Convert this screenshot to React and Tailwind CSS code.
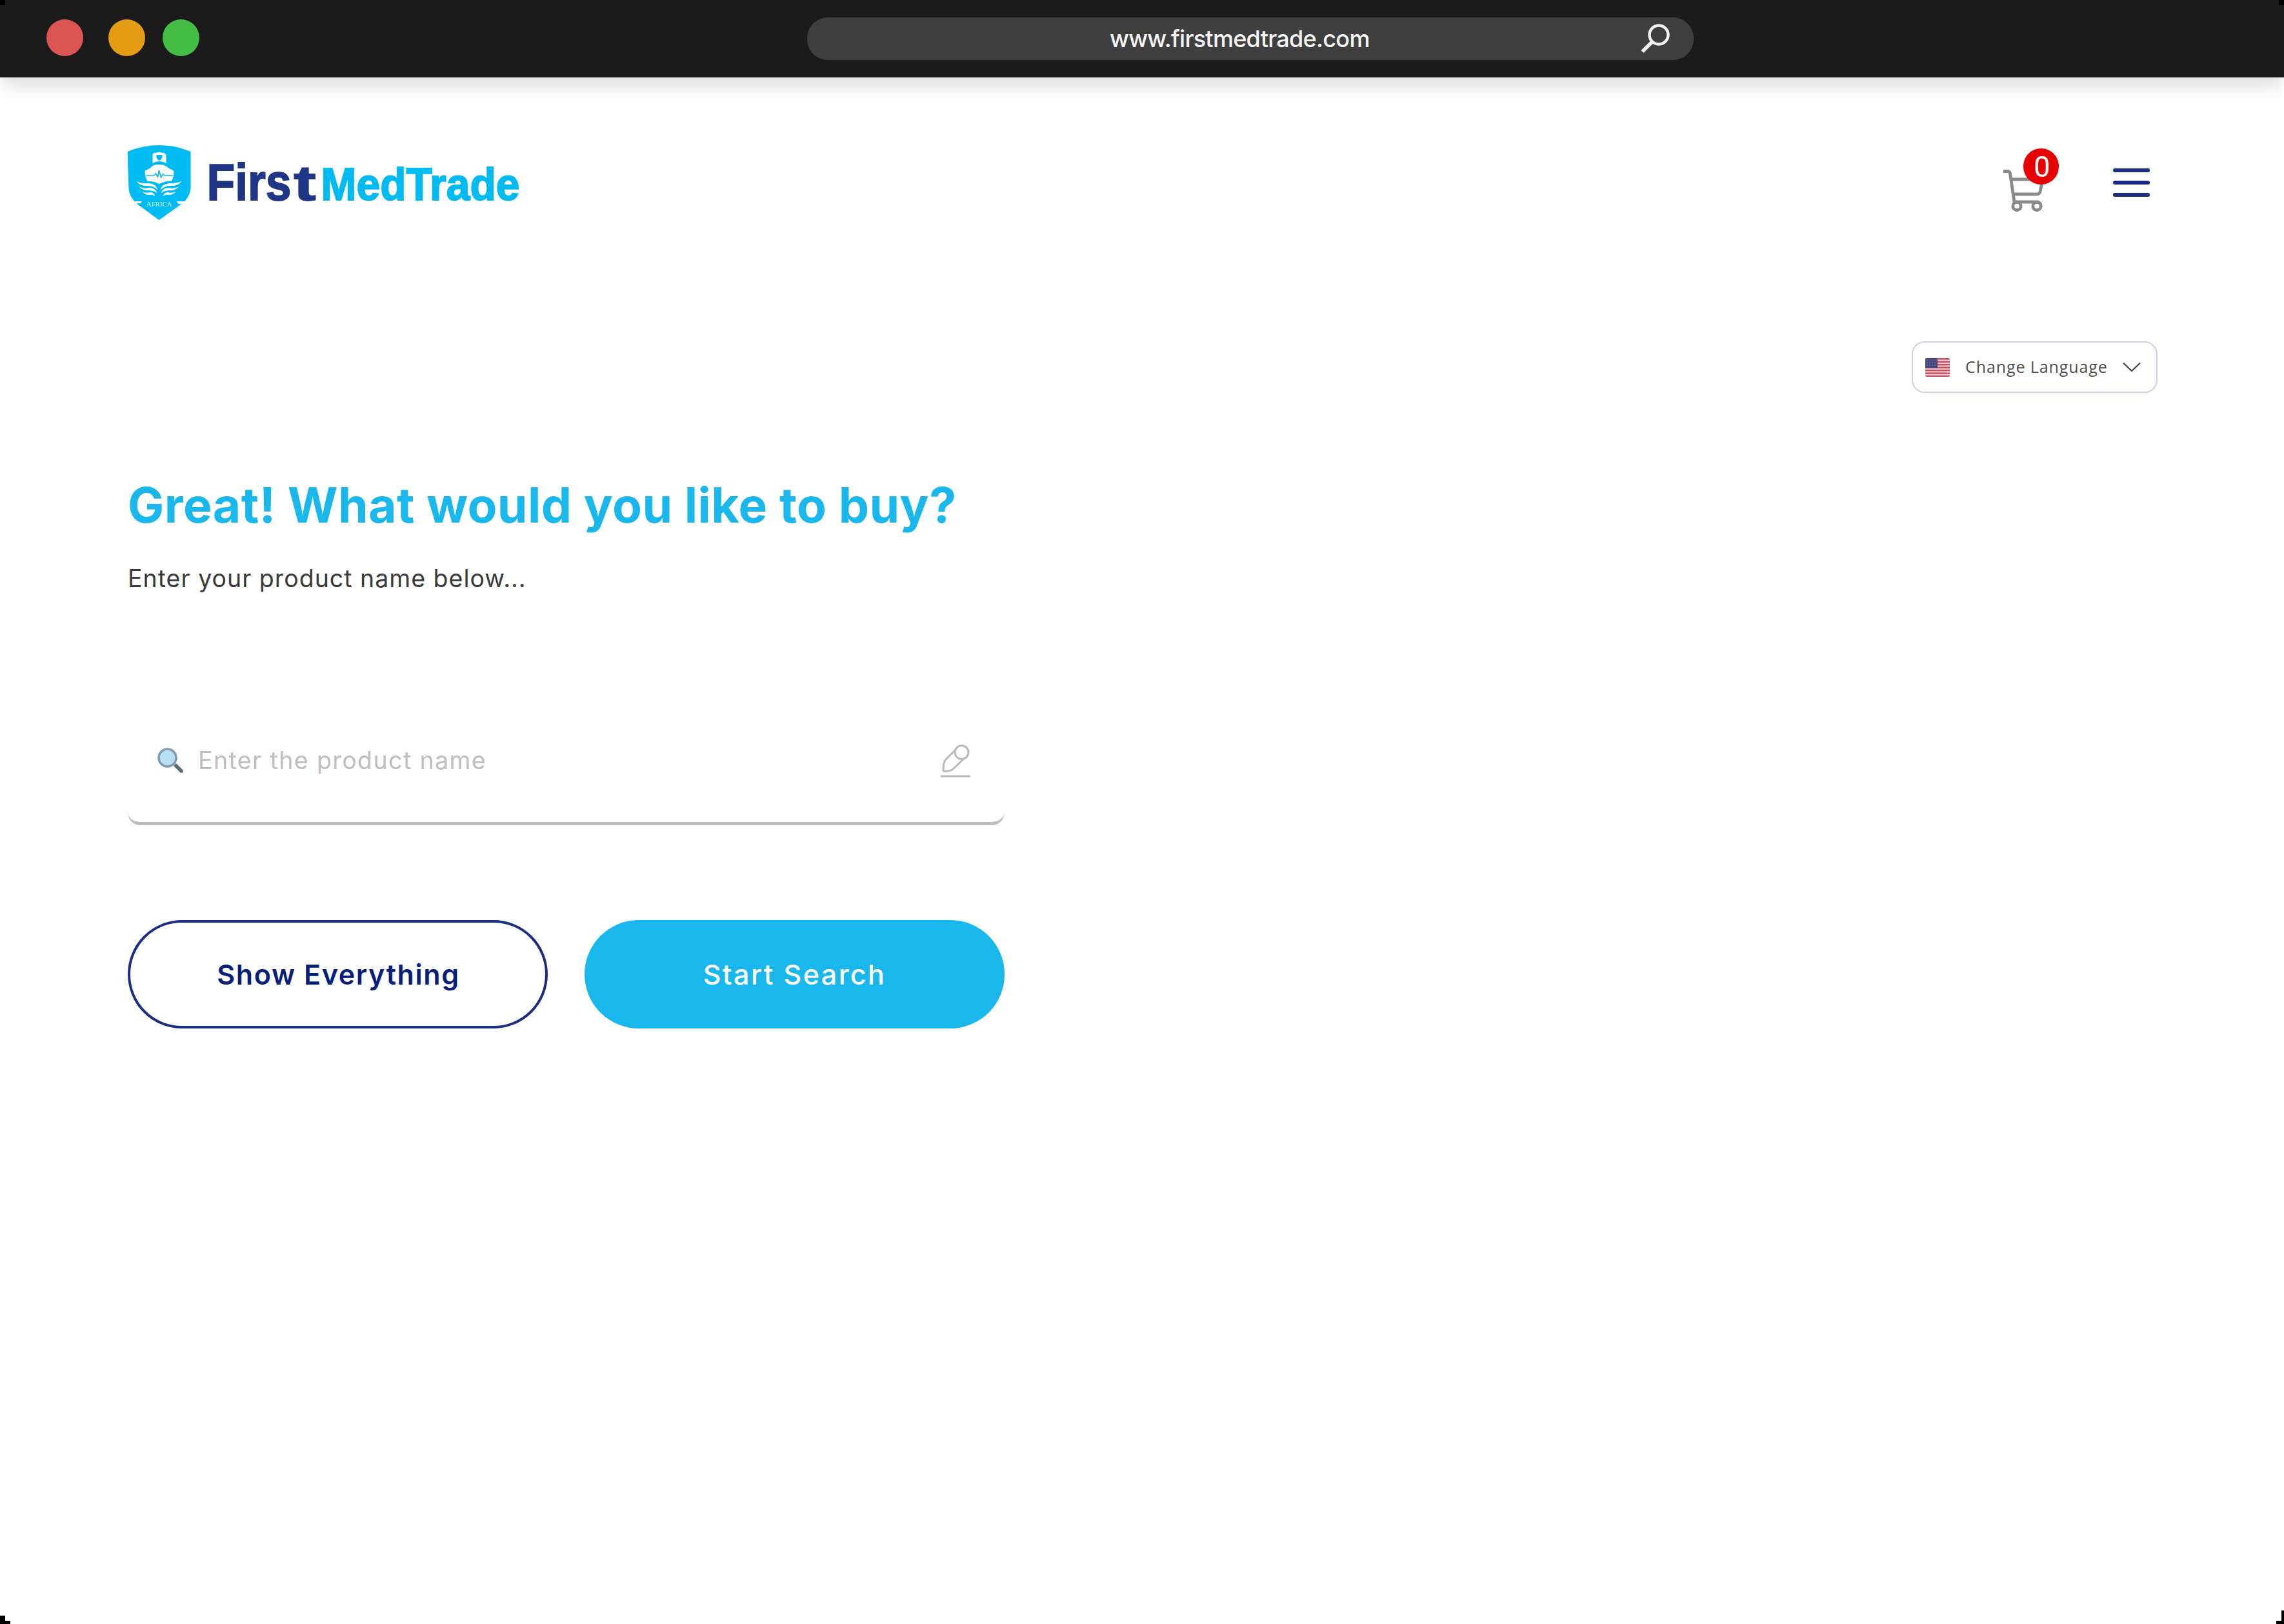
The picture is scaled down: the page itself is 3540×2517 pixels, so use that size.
function Shield() {
  return (
    <svg className="h-[118px] w-[100px] shrink-0" viewBox="0.5 0 100 118" fill="none">
      <path d="M0 11Q49-9 98 11V68Q97 82 84 92L49 117L15 92Q3 82 2 68Z" fill="#00baf2" />
      <path d="M39 29V16Q40 12 44 13Q49 10 54 13Q58 12 60 16V29Q49 23 39 29Z" fill="#fff" />
      <path d="M45 16H54V20Q53 23 49.500 25Q46 23 45 20Z" fill="#00baf2" />
      <path d="M27 41L36 36Q39 31 49 31Q59 31 63 36L72 41Q72 51 68 57Q60 56 49 61Q38 56 31 57Q27 50 27 41Z" fill="#fff" />
      <path d="M29 48H41L44 45L47 50L49 40L52 51L55 46L57 48H70" stroke="#00baf2" strokeWidth="1.600" />
      <g fill="#fff">
        <path d="M14 57Q23 61 34 60Q44 61 47 70Q40 64 32 64Q20 65 14 57Z" />
        <path d="M18 65Q25 69 34 67Q43 67 46 75Q39 71 33 71Q24 72 18 65Z" />
        <path d="M23 73Q29 76 36 74Q42 75 43 80Q38 77 33 78Q27 78 23 73Z" />
        <path d="M84 57Q75 61 65 60Q54 61 51 70Q58 64 66 64Q78 65 84 57Z" />
        <path d="M80 65Q73 69 64 67Q55 67 52 75Q59 71 65 71Q74 72 80 65Z" />
        <path d="M75 73Q69 76 62 74Q56 75 55 80Q60 77 65 78Q71 78 75 73Z" />
        <path d="M4 88H22L21 91H8Z" />
        <path d="M94 88H76L79 92H90Z" />
      </g>
      <text x="29" y="95.500" fontSize="11" textLength="40" lengthAdjust="spacingAndGlyphs" fill="#d8f5ff" fontFamily="'Liberation Serif', serif">AFRICA</text>
    </svg>
  );
}

function Logo() {
  return (
    <div className="flex items-start">
      <Shield />
      <svg className="h-[118px] w-[520px] overflow-visible" viewBox="298 224 520 118" fontFamily="'Liberation Sans', sans-serif" fontWeight="700">
        <g fill="#1f3585" stroke="#1f3585" strokeWidth="1.800">
          <text x="320.500" y="309.500" fontSize="79" textLength="131" lengthAdjust="spacingAndGlyphs">Firs</text>
          <text x="455.500" y="309.500" fontSize="76" textLength="34" lengthAdjust="spacingAndGlyphs">t</text>
        </g>
        <text x="497.500" y="310" fontSize="70" textLength="308" lengthAdjust="spacingAndGlyphs" fill="#00baf2" stroke="#00baf2" strokeWidth="1.800">MedTrade</text>
      </svg>
    </div>
  );
}

function Cart() {
  return (
    <div className="relative h-[96px] w-[90px]">
      <svg className="h-[96px] w-[90px]" viewBox="3102 232 90 96" fill="none" stroke="#8a8a8a" strokeWidth="4.800">
        <path d="M3105 265.500H3112Q3115 265.500 3115.500 269L3122 313H3158Q3162 314 3163 317M3117 278H3166L3162 297Q3161 301 3157 301H3121" />
        <circle cx="3126" cy="319.500" r="6.200" />
        <circle cx="3157" cy="319.500" r="6.200" />
      </svg>
      <span className="absolute left-[33.5px] top-[-2px] flex h-[56px] w-[55px] items-center justify-center rounded-full bg-[#e60000] pl-1 font-['Roboto',sans-serif] text-[45px] leading-none text-white">0</span>
    </div>
  );
}

function Flag() {
  return (
    <svg className="h-[29px] w-[38px]" viewBox="0 0 38 29">
      <clipPath id="flag"><rect width="38" height="29" rx="2.500" /></clipPath>
      <g clipPath="url(#flag)">
        <rect width="38" height="29" fill="#f3d5da" />
        {[0, 1, 2, 3, 4, 5, 6].map((i) => (
          <rect key={i} y={i * 4.46} width="38" height="2.500" fill="#c9505f" />
        ))}
        <rect width="19" height="15.500" fill="#46467f" />
        <g fill="#8b8bb5">
          {[2, 6, 10, 14].map((x) => [3, 7, 11].map((y) => <circle key={x + "-" + y} cx={x + 1} cy={y} r=".8" />))}
        </g>
      </g>
    </svg>
  );
}

export default function App() {
  return (
    <div className="flex h-[2517px] w-[3540px] flex-col overflow-hidden bg-[#fefefe] font-['Inter',sans-serif]">
      <div className="relative z-10 flex h-[120px] shrink-0 items-start bg-[#1b1b1b] shadow-[0_16px_24px_-4px_rgba(0,0,0,0.13)]">
        <span className="absolute left-0 top-0 size-2 bg-black" />
        <span className="absolute right-0 top-0 size-2 bg-black" />
        <div className="flex pl-[72px] pt-[30px]">
          <span className="size-[57px] rounded-full bg-[#db5553]" />
          <span className="ml-[39px] size-[57px] rounded-full bg-[#e59b13]" />
          <span className="ml-[27px] size-[57px] rounded-full bg-[#43bd43]" />
        </div>
        <div className="ml-[942px] mt-[27px] flex h-[66px] w-[1374px] items-center justify-between rounded-[32px] bg-[#3f3f3f] pl-[469px] pr-[36px]">
          <span className="whitespace-nowrap text-[36px] font-medium leading-none tracking-[-0.7px] text-[#f4f4f4]">www.firstmedtrade.com</span>
          <svg className="h-[46px] w-[46px]" viewBox="0 0 46 46" fill="none" stroke="#f2f2f2">
            <circle cx="28" cy="17" r="14.500" strokeWidth="4.500" />
            <path d="M17.500 28L2.500 43" strokeWidth="5.500" />
          </svg>
        </div>
      </div>

      <header className="flex items-start justify-between pl-[198px] pr-[208px] pt-[104px]">
        <Logo />
        <div className="flex items-start pt-2">
          <Cart />
          <div className="ml-[83px] mt-[29px] flex w-[57px] flex-col gap-[13px]">
            <span className="h-[6px] rounded-full bg-[#1a2c7f]" />
            <span className="h-[6px] rounded-full bg-[#1a2c7f]" />
            <span className="h-[6px] rounded-full bg-[#1a2c7f]" />
          </div>
        </div>
      </header>

      <div className="mt-[187px] flex justify-end pr-[196px]">
        <button className="flex h-[80px] w-[381px] items-center rounded-[20px] border-2 border-[#cfcfe6] pl-[19px]">
          <Flag />
          <span className="-mt-[2px] ml-[24px] w-[219px] whitespace-nowrap text-left font-['Open_Sans',sans-serif] text-[25px] leading-none tracking-[0.9px] text-[#4f4f4f]">Change Language</span>
          <svg className="ml-[25px] h-[16px] w-[28px]" viewBox="0 0 28 16" fill="none" stroke="#444" strokeWidth="2.200">
            <path d="M1 1.500L14 14L27 1.500" />
          </svg>
        </button>
      </div>

      <main className="ml-[198px] mt-[127px] w-[1360px]">
        <h1 className="whitespace-nowrap text-[75px] font-bold leading-[94px] tracking-[0.45px] text-[#1ab7ed]">Great! What would you like to buy?</h1>
        <p className="mt-[42px] whitespace-nowrap text-[37.5px] leading-[50px] tracking-[1px] text-[#3a3a3a]">Enter your product name below...</p>
        <div className="mt-[157px] flex h-[200px] w-[1359px] items-start rounded-[20px] border-b-[5px] border-[#bdbdbd] pl-[46px] pr-[52px] pt-[72px]">
          <svg className="mt-[8px] h-[41px] w-[41px]" viewBox="0 0 41 41">
            <path d="M25 28L29 24L39 34Q42 39 36 39Z" fill="#5c6c76" />
            <circle cx="15.500" cy="15.500" r="13.500" fill="#b9dff5" stroke="#7f9baa" strokeWidth="3.500" />
          </svg>
          <span className="ml-[22px] mt-[3px] whitespace-nowrap text-[37.5px] leading-[50px] tracking-[1.4px] text-[#bfbfbf]">Enter the product name</span>
          <svg className="ml-auto mt-[2px] h-[54px] w-[48px]" viewBox="0 0 48 54" fill="none" stroke="#bababa" strokeWidth="3">
            <circle cx="33.500" cy="13" r="10.500" />
            <path d="M25 8L8 25Q5 29 5 42Q16 43 20 39L38 22" strokeLinejoin="round" />
            <path d="M1 50H47" />
          </svg>
        </div>
        <div className="mt-[147px] flex gap-[57px]">
          <button className="flex h-[168px] w-[651px] items-center justify-center whitespace-nowrap rounded-full border-4 border-[#1a2f82] pl-[2px] text-[43px] font-semibold tracking-[1.6px] text-[#071f78]">Show Everything</button>
          <button className="flex h-[168px] w-[651px] items-center justify-center whitespace-nowrap rounded-full bg-[#1ab7ed] text-[43px] font-medium tracking-[2.4px] text-white">Start Search</button>
        </div>
      </main>

      <footer className="mt-auto flex items-end justify-between">
        <div className="flex items-end">
          <span className="h-[13px] w-2 bg-black" />
          <span className="h-[5px] w-2 bg-black" />
        </div>
        <div className="flex items-end">
          <span className="h-[5px] w-2 bg-black" />
          <span className="h-[21px] w-1 bg-black" />
        </div>
      </footer>
    </div>
  );
}
